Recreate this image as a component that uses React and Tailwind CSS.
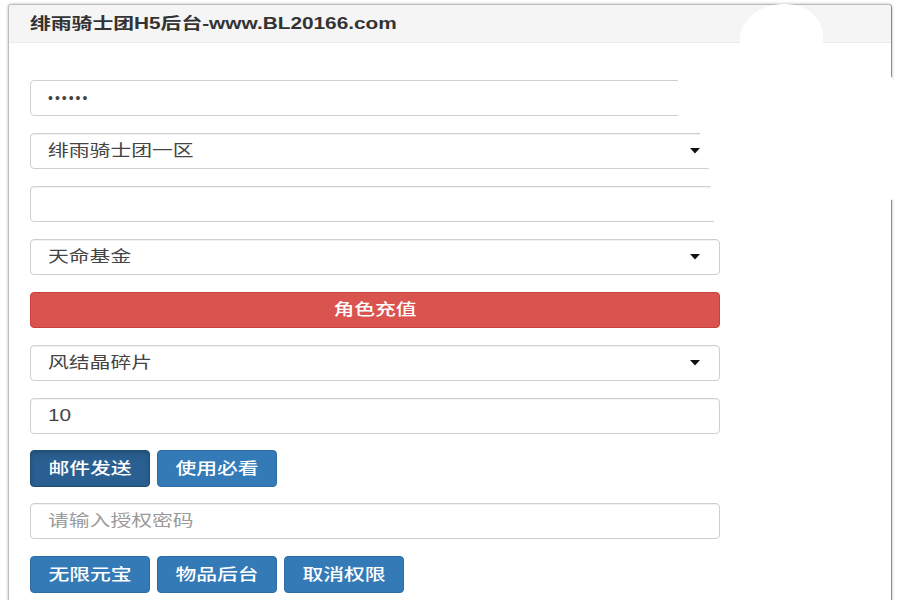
import React from "react";

const FONT = { fontFamily: '"Liberation Sans", "Noto Sans CJK SC", sans-serif' };

function Caret() {
  return (
    <svg width="10" height="6" viewBox="0 0 10 6" className="absolute right-[19px] top-1/2 -translate-y-1/2">
      <path d="M0 0 L10 0 L5 5.5 Z" fill="#111" />
    </svg>
  );
}

function Field({ children, select, placeholder }) {
  return (
    <div className="relative w-[690px] h-[36px] rounded-[4px] border border-[#cfcfcf] bg-white flex items-center pl-[17px] shadow-[inset_0_1px_1px_rgba(0,0,0,0.06)]">
      {children != null && (
        <span
          className={
            "inline-block origin-left scale-x-[1.3] text-[16px] leading-none " +
            (placeholder ? "text-[#9a9a9a]" : "text-[#444]")
          }
        >
          {children}
        </span>
      )}
      {select && <Caret />}
    </div>
  );
}

function Btn({ children, active }) {
  return (
    <div
      className={
        "w-[120px] h-[37px] rounded-[4px] border flex items-center justify-center " +
        (active
          ? "bg-[#2a5f91] border-[#204d74] shadow-[inset_0_3px_5px_rgba(0,0,0,0.15)]"
          : "bg-[#337ab7] border-[#2e6da4]")
      }
    >
      <span className="inline-block origin-center scale-x-[1.3] text-[16px] font-medium leading-none text-white">{children}</span>
    </div>
  );
}

export default function App() {
  return (
    <div className="relative w-[900px] h-[600px] overflow-hidden bg-white pt-[4px] px-[8px]" style={FONT}>
      <div className="h-[640px] rounded-[4px] border border-[#bdbdbd] border-r-[#8a8a8a] bg-white shadow-[0_0_3px_rgba(0,0,0,0.3)] overflow-hidden">
        <div className="h-[38px] bg-[#f5f5f5] border-b border-[#ececec] flex items-center pl-[21px]">
          <span className="inline-block origin-left scale-x-[1.3] text-[16px] font-bold text-[#333] leading-none">
            绯雨骑士团H5后台-www.BL20166.com
          </span>
        </div>
        <div className="px-[21px] pt-[37px] flex flex-col gap-[17px]">
          <div className="relative w-[690px] h-[36px] rounded-[4px] border border-[#cfcfcf] bg-white flex items-center pl-[17px]">
            <span className="text-[14px] tracking-[2px] text-[#444] leading-none">••••••</span>
          </div>
          <Field select>绯雨骑士团一区</Field>
          <Field />
          <Field select>天命基金</Field>
          <div className="w-[690px] h-[36px] rounded-[4px] border border-[#c9403c] bg-[#d9534f] flex items-center justify-center">
            <span className="inline-block origin-center scale-x-[1.3] text-[16px] font-medium leading-none text-white">角色充值</span>
          </div>
          <Field select>风结晶碎片</Field>
          <Field>10</Field>
          <div className="flex gap-[7px] -mt-[1px] -mb-[1px]">
            <Btn active>邮件发送</Btn>
            <Btn>使用必看</Btn>
          </div>
          <Field placeholder>请输入授权密码</Field>
          <div className="flex gap-[7px]">
            <Btn>无限元宝</Btn>
            <Btn>物品后台</Btn>
            <Btn>取消权限</Btn>
          </div>
        </div>
      </div>
      <svg className="absolute left-0 top-0 pointer-events-none" width="900" height="600" viewBox="0 0 900 600">
        <path
          d="M 740 43 C 738 22, 758 4, 785 4 C 810 4, 826 22, 823 43 C 850 48, 888 60, 896 86 L 900 88 L 900 196 C 880 205, 850 222, 800 232 C 770 238, 740 242, 719 241 L 714 222 L 709 170 L 700 133 L 678 117 L 678 79 C 690 60, 715 48, 740 43 Z"
          fill="#ffffff"
        />
      </svg>
    </div>
  );
}
